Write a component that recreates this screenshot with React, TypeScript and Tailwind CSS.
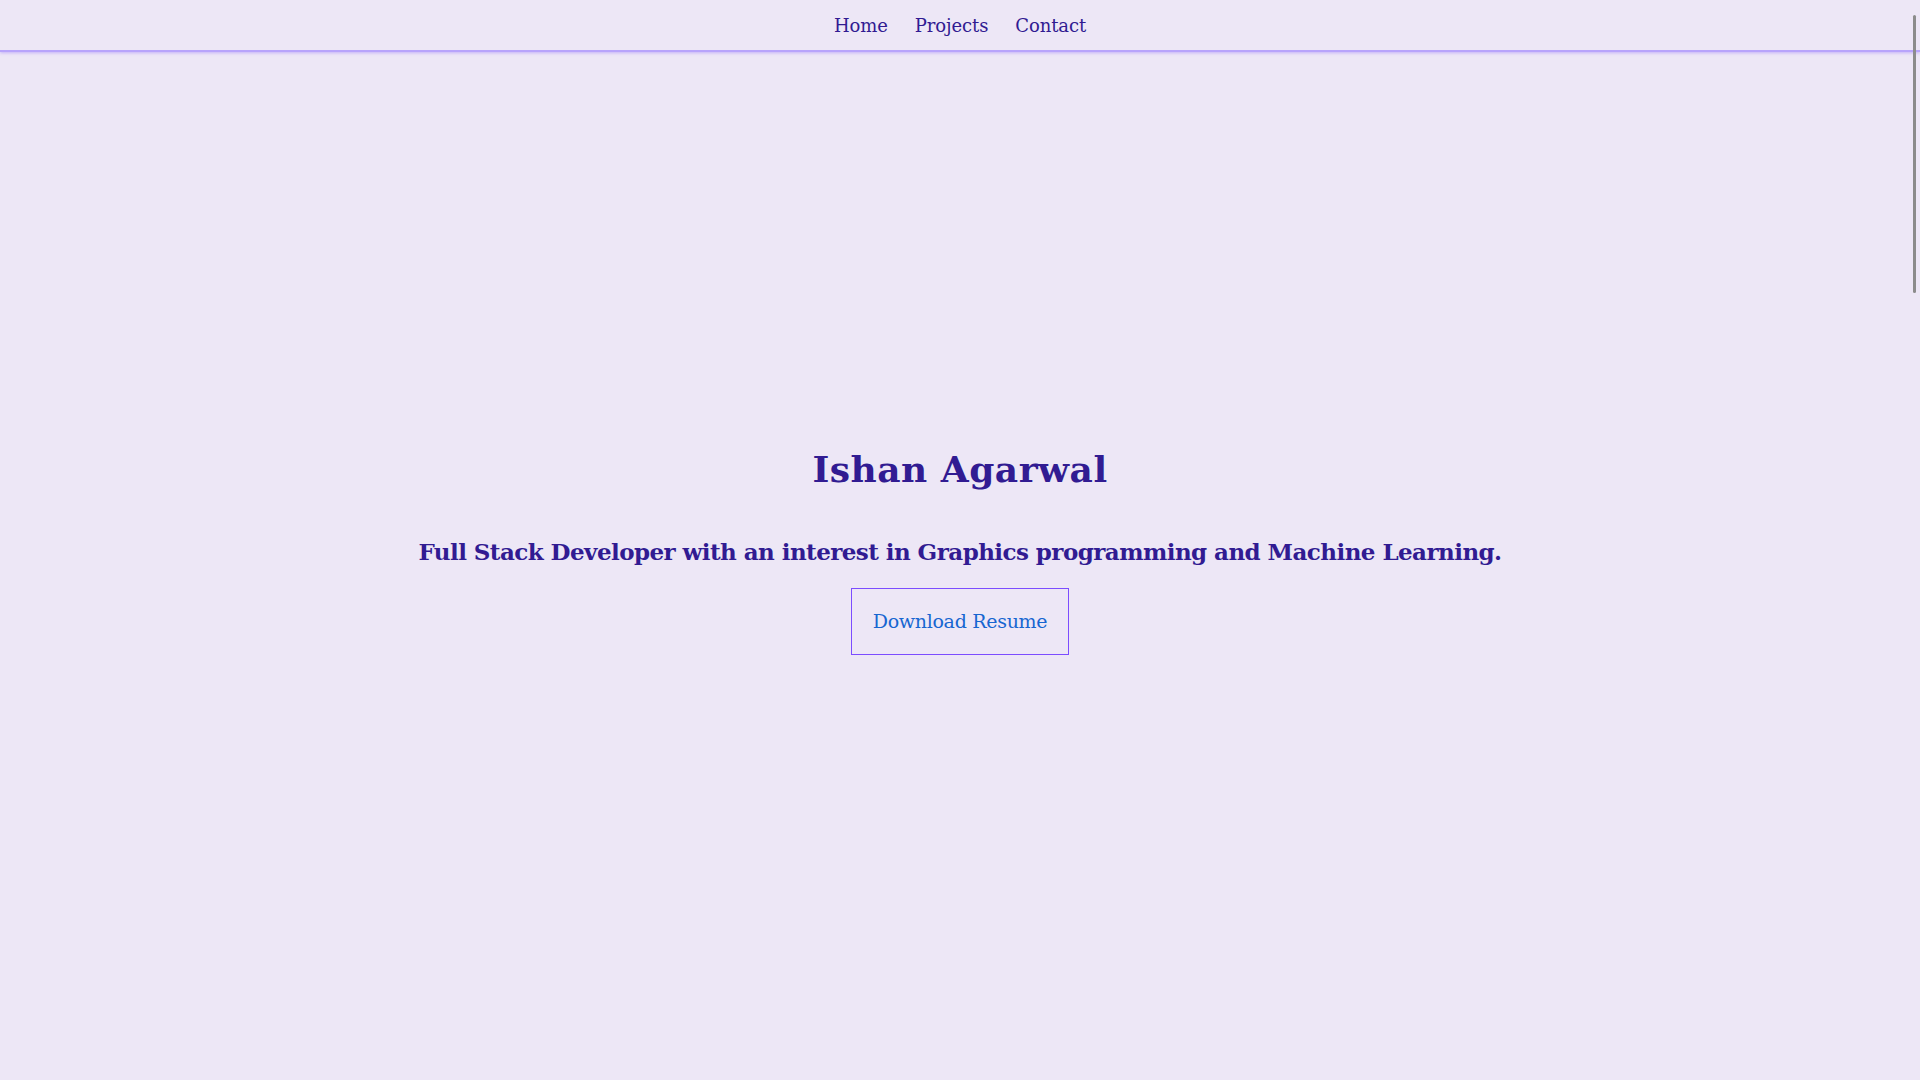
import React from "react"

const serif = "font-['Roboto_Slab','DejaVu_Serif',serif]"

export default function App() {
  const links = ["Home", "Projects", "Contact"]

  return (
    <div className={`relative h-screen overflow-hidden bg-[#ede7f6] text-[#311b92] ${serif}`}>
      {/* --- NAVBAR --- */}
      <header className="h-[52px] flex items-center justify-center gap-[27px] border-b-2 border-[#b8a4fb] shadow-[0_1px_3px_rgba(124,77,255,0.35)]">
        {links.map((l) => (
          <a key={l} href="#" className="text-[18px] leading-none tracking-[-0.1px] pt-[2px]">
            {l}
          </a>
        ))}
      </header>

      {/* --- HERO --- */}
      <main className="flex flex-col items-center pt-[393px]">
        <h1 className="text-[36px] leading-[48px] font-bold tracking-[0.5px]">Ishan Agarwal</h1>
        <h2 className="mt-[42px] text-[23px] leading-[34px] font-bold tracking-[-0.55px]">
          Full Stack Developer with an interest in Graphics programming and Machine Learning.
        </h2>
        <button className="mt-[19px] w-[218px] h-[67px] border border-[#7c4dff] text-[#1766d1] text-[19px] tracking-[-0.3px]">
          Download Resume
        </button>
      </main>

      {/* overlay scroll thumb */}
      <div className="absolute top-[15px] right-[4px] w-[3px] h-[278px] rounded-full bg-[#8c8c8c]" />
    </div>
  )
}
